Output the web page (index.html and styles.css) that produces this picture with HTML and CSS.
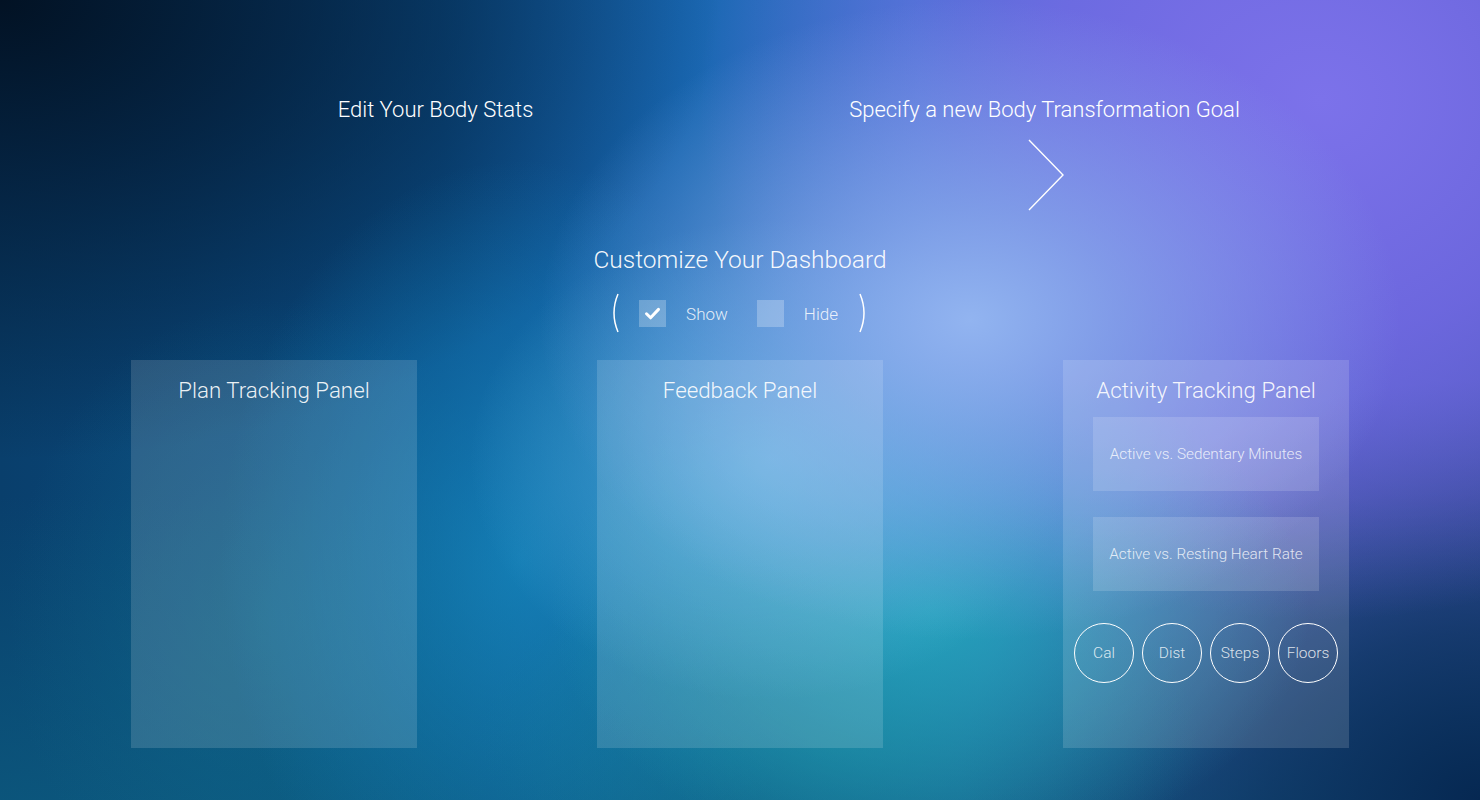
FILE: index.html
```html
<!DOCTYPE html>
<html lang="en">
<head>
<meta charset="utf-8">
<title>Dashboard Settings</title>
<link rel="stylesheet" href="styles.css">
</head>
<body>
<div class="page">
  <header class="top">
    <div class="top-col">
      <a class="top-link">Edit Your Body Stats</a>
    </div>
    <div class="top-col">
      <a class="top-link">Specify a new Body Transformation Goal</a>
      <svg class="chevron" width="40" height="74" viewBox="0 0 40 74">
        <path d="M3 1 L37 36 L3 71" fill="none" stroke="#fff" stroke-width="1.4"/>
      </svg>
    </div>
  </header>

  <section class="customize">
    <h1 class="customize-title">Customize Your Dashboard</h1>
    <div class="toggle-row">
      <svg class="paren" width="10" height="40" viewBox="0 0 10 40">
        <path d="M8 1 Q0 20 8 39" fill="none" stroke="#fff" stroke-width="1.5"/>
      </svg>
      <span class="box checked">
        <svg width="27" height="27" viewBox="0 0 27 27">
          <path d="M7.5 13.8 L11.6 17.8 L19.5 9.4" fill="none" stroke="#fff" stroke-width="3" stroke-linecap="round" stroke-linejoin="round"/>
        </svg>
      </span>
      <span class="toggle-label">Show</span>
      <span class="box"></span>
      <span class="toggle-label">Hide</span>
      <svg class="paren" width="10" height="40" viewBox="0 0 10 40">
        <path d="M2 1 Q10 20 2 39" fill="none" stroke="#fff" stroke-width="1.5"/>
      </svg>
    </div>
  </section>

  <main class="panels">
    <section class="panel">
      <h2 class="panel-title">Plan Tracking Panel</h2>
    </section>
    <section class="panel">
      <h2 class="panel-title">Feedback Panel</h2>
    </section>
    <section class="panel">
      <h2 class="panel-title">Activity Tracking Panel</h2>
      <div class="sub-box">Active vs. Sedentary Minutes</div>
      <div class="sub-box">Active vs. Resting Heart Rate</div>
      <div class="circles">
        <span class="circle">Cal</span>
        <span class="circle">Dist</span>
        <span class="circle">Steps</span>
        <span class="circle">Floors</span>
      </div>
    </section>
  </main>
</div>
</body>
</html>
```

FILE: styles.css
```css
html, body {
  margin: 0;
  padding: 0;
}

body {
  width: 1480px;
  height: 800px;
  overflow: hidden;
  font-family: Roboto, "Liberation Sans", sans-serif;
  color: #fff;
  background-color: #0d4f86;
  background-image:
    radial-gradient(ellipse 430px 320px at 970px 320px, rgba(146, 180, 240, 1) 0%, rgba(138, 174, 236, 0.7) 35%, rgba(120, 160, 230, 0) 100%),
    radial-gradient(ellipse 300px 240px at 770px 460px, rgba(96, 186, 228, 0.75) 0%, rgba(96, 186, 228, 0) 100%),
    radial-gradient(ellipse 380px 250px at 930px 610px, rgba(36, 166, 188, 0.9) 0%, rgba(36, 160, 186, 0) 100%),
    radial-gradient(ellipse 360px 200px at 840px 740px, rgba(20, 130, 146, 0.6) 0%, rgba(20, 130, 146, 0) 100%),
    radial-gradient(ellipse 620px 520px at 1320px 100px, rgba(124, 114, 234, 1) 0%, rgba(116, 106, 230, 0.8) 45%, rgba(110, 100, 228, 0) 100%),
    radial-gradient(ellipse 300px 400px at 520px 560px, rgba(22, 138, 192, 0.75) 0%, rgba(22, 134, 190, 0) 100%),
    radial-gradient(ellipse 260px 320px at 270px 620px, rgba(16, 108, 138, 0.55) 0%, rgba(16, 108, 138, 0) 100%),
    radial-gradient(ellipse 720px 460px at 0px 0px, rgba(2, 18, 36, 1) 0%, rgba(3, 24, 48, 0.7) 40%, rgba(3, 24, 48, 0) 100%),
    radial-gradient(ellipse 520px 420px at 1480px 800px, rgba(6, 40, 82, 1) 0%, rgba(8, 44, 86, 0.7) 40%, rgba(8, 44, 86, 0) 100%),
    linear-gradient(180deg, rgba(12, 90, 125, 0) 62%, rgba(12, 92, 128, 0.75) 100%),
    linear-gradient(90deg, #093f6c 0%, #0b4f8a 30%, #1866b0 46%, #3a78cc 62%, #5a66cc 82%, #4a58b8 100%);
}

.page {
  width: 1218px;
  margin: 0 auto;
  display: flex;
  flex-direction: column;
}

/* header */
.top {
  display: grid;
  grid-template-columns: 1fr 1fr;
  padding-top: 97px;
}

.top-col {
  display: flex;
  flex-direction: column;
  align-items: center;
}

.top-link {
  font-family: Roboto, "Liberation Sans", sans-serif;
  font-weight: 300;
  font-size: 22px;
  line-height: 26px;
  color: #fff;
}

.chevron {
  display: block;
  margin-top: 16px;
  margin-left: 2px;
}

/* customize */
.customize {
  display: flex;
  flex-direction: column;
  align-items: center;
  margin-top: 31px;
}

.customize-title {
  margin: 0;
  font-weight: 300;
  font-size: 24.5px;
  line-height: 32px;
  color: rgba(255, 255, 255, 0.95);
}

.toggle-row {
  display: flex;
  align-items: center;
  height: 40px;
  margin-top: 17px;
  margin-left: -2px;
}

.paren {
  display: block;
}

.box {
  width: 27px;
  height: 27px;
  background: rgba(255, 255, 255, 0.25);
  display: flex;
  margin-left: 19px;
}

.box + .toggle-label {
  margin-left: 20px;
}

.toggle-label + .box {
  margin-left: 29px;
}

.toggle-label {
  font-weight: 300;
  font-size: 17px;
  color: rgba(255, 255, 255, 0.85);
  margin-top: 1px;
}

.toggle-label + .paren {
  margin-left: 20px;
}

/* panels */
.panels {
  display: grid;
  grid-template-columns: 286px 286px 286px;
  column-gap: 180px;
  margin-top: 27px;
}

.panel {
  height: 388px;
  background: rgba(255, 255, 255, 0.14);
  display: flex;
  flex-direction: column;
  align-items: center;
}

.panel-title {
  margin: 16px 0 0;
  font-weight: 300;
  font-size: 22.3px;
  line-height: 28px;
  color: rgba(255, 255, 255, 0.92);
}

.sub-box {
  width: 226px;
  height: 74px;
  margin-top: 13px;
  background: rgba(255, 255, 255, 0.15);
  display: flex;
  align-items: center;
  justify-content: center;
  font-weight: 300;
  font-size: 15.3px;
  color: rgba(255, 255, 255, 0.8);
}

.sub-box + .sub-box {
  margin-top: 26px;
}

.circles {
  display: flex;
  gap: 8px;
  margin-top: 32px;
}

.circle {
  box-sizing: border-box;
  width: 60px;
  height: 60px;
  border: 1.5px solid #fff;
  border-radius: 50%;
  display: flex;
  align-items: center;
  justify-content: center;
  font-weight: 300;
  font-size: 15.5px;
  color: rgba(255, 255, 255, 0.82);
}
```
